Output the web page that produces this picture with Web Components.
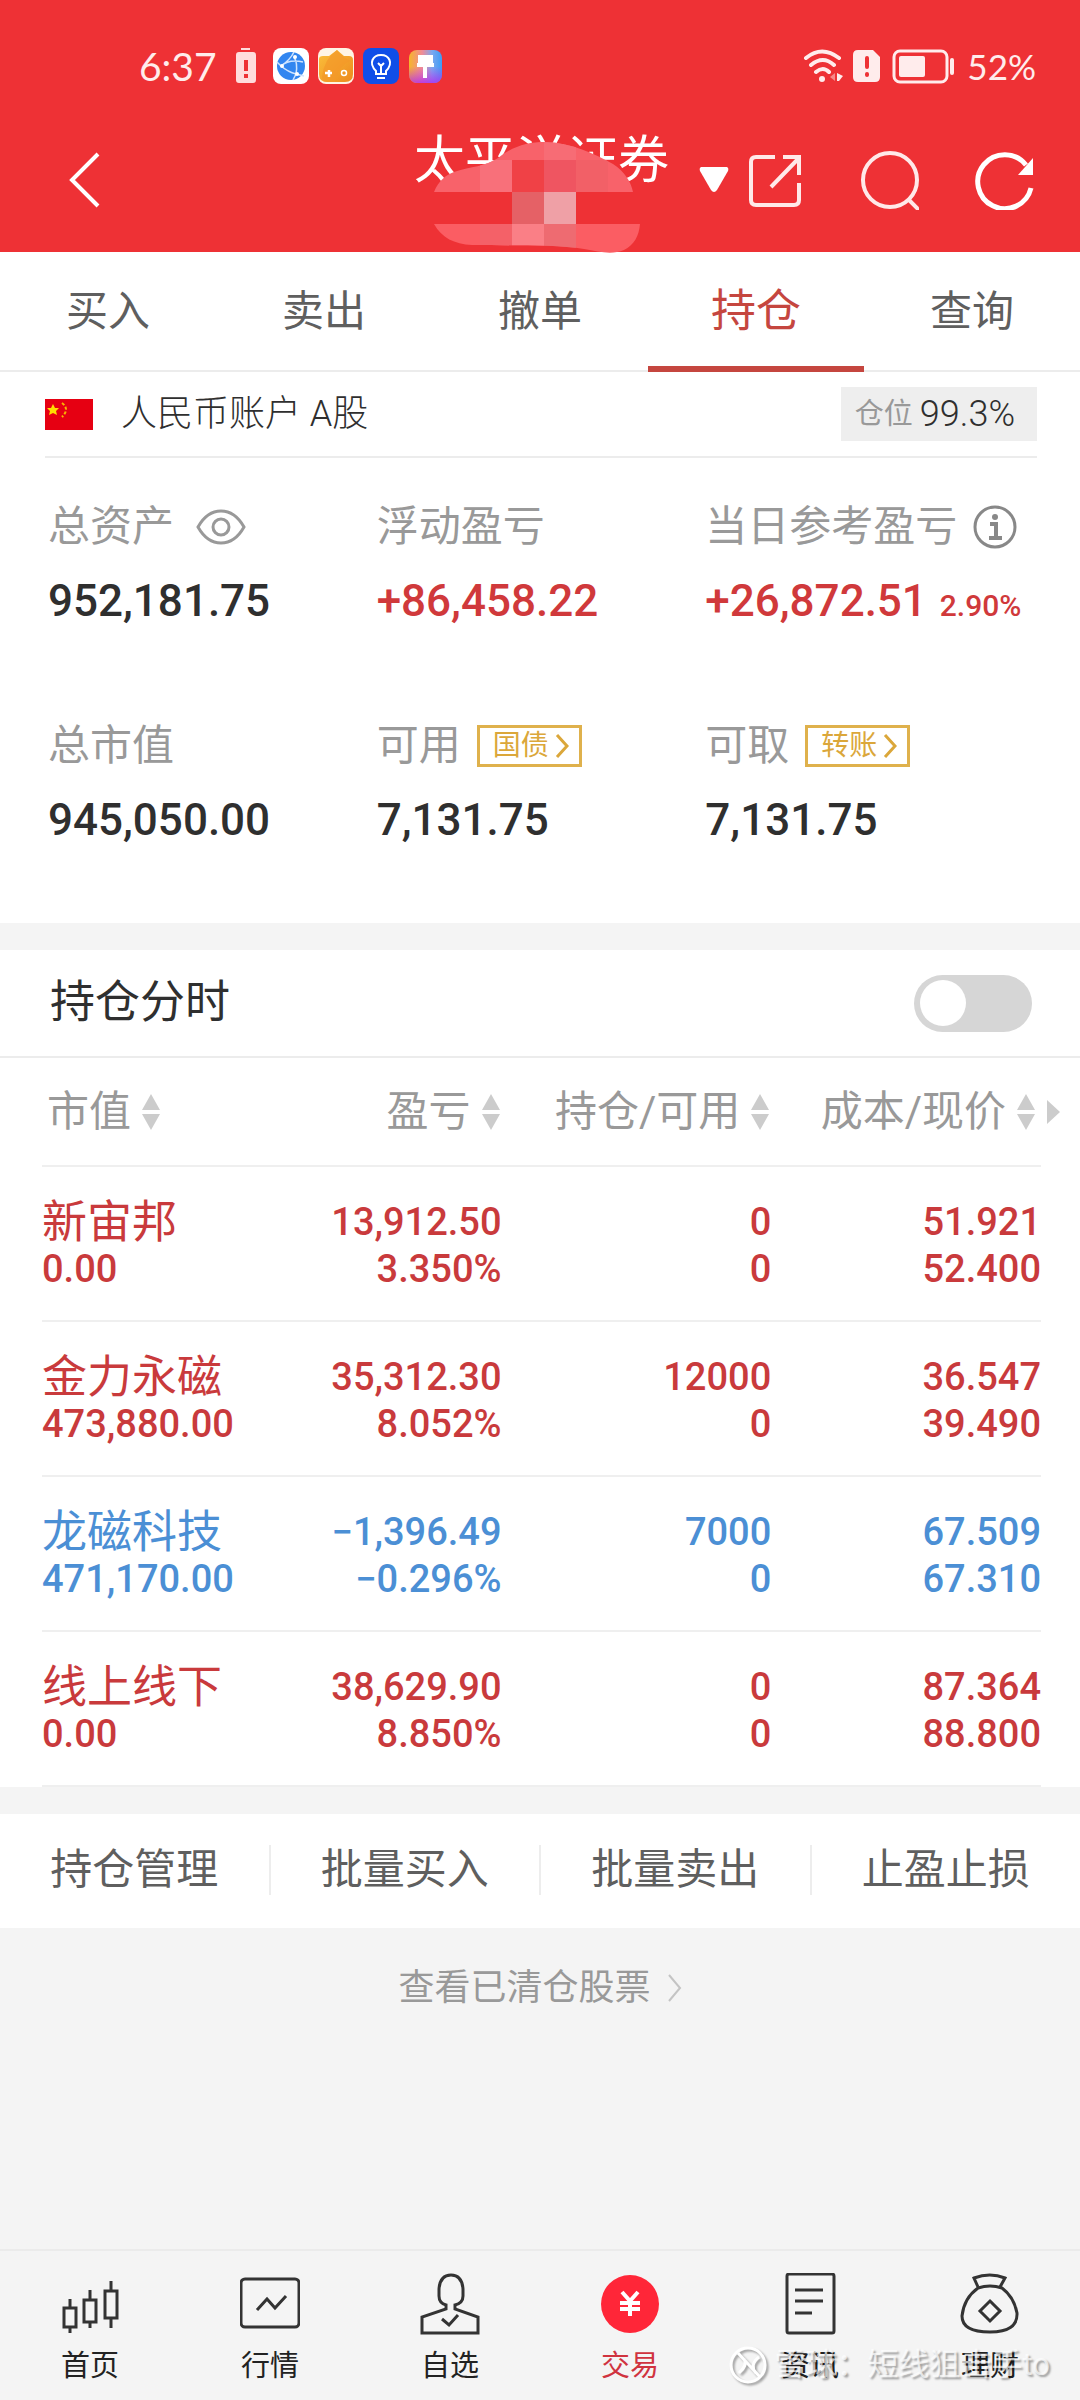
<!DOCTYPE html>
<html lang="zh-CN">
<head>
<meta charset="utf-8">
<meta name="viewport" content="width=device-width, initial-scale=1">
<title>持仓</title>
<style>
  * { box-sizing: border-box; }
  body {
    margin: 0;
    min-height: 100vh;
    display: flex;
    flex-direction: column;
    background: #f4f4f4;
    color: #2f2f2f;
    font-family: Roboto, "Noto Sans CJK SC", sans-serif;
  }
  main { display: flex; flex-direction: column; }
  trade-panel + trade-panel { margin-top: 27px; }
  app-nav { margin-top: auto; }
</style>
</head>
<body>
<app-header battery="52%" time="6:37">太平洋证券</app-header>
<main>
  <trade-panel>
    <trade-tabs data-tabs='["买入","卖出","撤单","持仓","查询"]' active="3"></trade-tabs>
    <account-bar label="仓位" ratio="99.3%">人民币账户 A股</account-bar>
    <account-summary>
      <summary-item value="952,181.75" icon="eye">总资产</summary-item>
      <summary-item value="+86,458.22" up>浮动盈亏</summary-item>
      <summary-item value="+26,872.51" extra="2.90%" icon="info" up>当日参考盈亏</summary-item>
      <summary-item value="945,050.00">总市值</summary-item>
      <summary-item value="7,131.75" link="国债">可用</summary-item>
      <summary-item value="7,131.75" link="转账">可取</summary-item>
    </account-summary>
  </trade-panel>
  <trade-panel>
    <switch-row>持仓分时</switch-row>
    <holdings-table></holdings-table>
  </trade-panel>
  <trade-panel>
    <action-bar data-actions='["持仓管理","批量买入","批量卖出","止盈止损"]'></action-bar>
  </trade-panel>
  <more-link>查看已清仓股票</more-link>
</main>
<app-nav active="3"></app-nav>

<script>
class BaseElement extends HTMLElement {
  constructor() {
    super();
    this.attachShadow({ mode: "open" });
  }

  connectedCallback() {
    this.shadowRoot.innerHTML = `
      <style>
        * { box-sizing: border-box; }
        :host { display: block; }
        svg { display: block; flex: none; }
        button, a {
          font: inherit; color: inherit; background: none; border: 0;
          margin: 0; padding: 0; text-decoration: none; cursor: pointer;
        }
        ${this.styles()}
      </style>
      ${this.template()}
    `;
  }

  styles() {
    return "";
  }

  template() {
    return "<slot></slot>";
  }
}

class AppHeader extends BaseElement {
  styles() {
    return `
      :host { background: #ee3135; color: #fff; }
      .status {
        display: flex; align-items: center; justify-content: space-between;
        height: 108px; padding: 24px 44px 0 139px;
        font: 39px/48px Lato, sans-serif; color: #ffecec;
      }
      .status-group { display: flex; align-items: center; gap: 10px; }
      .battery { font-size: 35px; padding-left: 2px; }
      .time { padding-right: 8px; }
      .bar {
        display: grid; grid-template-columns: 1fr auto 1fr; align-items: center;
        height: 144px; padding: 0 45px 0 48px;
      }
      .back { justify-self: start; padding-left: 16px; }
      .title {
        position: relative; margin: 0 -10px; padding-bottom: 38px;
        font-size: 51px; line-height: 60px; font-weight: 400;
      }
      .title svg { position: absolute; left: 20px; top: 9px; }
      .tools { display: flex; justify-content: flex-end; align-items: center; gap: 56px; }
      .switch { display: flex; align-items: center; gap: 18px; }
    `;
  }

  template() {
    return `
      <div class="status">
        <div class="status-group">
          <span class="time">${this.getAttribute("time")}</span>
          <svg width="22" height="36" viewBox="0 0 22 36">
            <path fill="#ffdcdc" d="M6 0h9v2H6zM4 4h14q3 0 3 3v25q0 3-3 3H4q-3 0-3-3V7q0-3 3-3z"/>
            <path stroke="#ee3135" stroke-width="4" d="M11 12v11M11 26v4"/>
          </svg>
          <svg width="176" height="38" viewBox="0 0 176 38">
            <defs>
              <linearGradient id="fox" x1="0" y1="0" x2="1" y2="1"><stop stop-color="#fbc03b"/><stop offset="1" stop-color="#ed8a1e"/></linearGradient>
              <linearGradient id="paint" x1="0" y1="0" x2="1" y2="0"><stop stop-color="#f7b529"/><stop offset=".4" stop-color="#f08b97"/><stop offset=".7" stop-color="#7aa8f0"/><stop offset="1" stop-color="#3c9bf5"/></linearGradient>
              <linearGradient id="paint2" x1="0" y1="0" x2="0" y2="1"><stop offset=".5" stop-color="#c32ef0" stop-opacity="0"/><stop offset="1" stop-color="#b02bf0" stop-opacity=".8"/></linearGradient>
            </defs>
            <g transform="translate(6 0)">
              <rect y="1" width="36" height="36" rx="8" fill="#fff"/>
              <circle cx="18" cy="19" r="14" fill="#3286f0"/>
              <path fill="none" stroke="#cfe4ff" stroke-width="1.5" d="M21 5q-4 8-13 14 7 6 15 8 2-11-2-17M8 19l-4-4M8 19q8-7 22-4M23 27l8 2M23 27l-3 6"/>
              <circle cx="9" cy="19" r="2" fill="#fff"/><circle cx="22" cy="10" r="2" fill="#fff"/><circle cx="24" cy="27" r="2" fill="#fff"/>
            </g>
            <g transform="translate(51 0)">
              <rect y="1" width="36" height="36" rx="8" fill="#fff4e4"/>
              <path fill="url(#fox)" d="M1 12q0-3 4-3h6l8-6 7 6h5q4 0 4 4v14q0 8-8 8H9q-8 0-8-8z"/>
              <path fill="#f3982a" d="M4 30Q6 12 19 3q6 8 14 11-12 3-16 21H9q-5 0-5-5z" opacity=".7"/>
              <path stroke="#fff" stroke-width="2.5" d="M11 23v7M7 26h7"/>
              <circle cx="26" cy="26" r="2.5" fill="none" stroke="#fff" stroke-width="1.5"/>
            </g>
            <g transform="translate(96 0)">
              <rect y="1" width="36" height="36" rx="8" fill="#104ee8"/>
              <path fill="none" stroke="#fff" stroke-width="2" d="M13 27v-3c-8-8-3-16 5-16s13 8 5 16v3zM14 31h8M18 26v-7M15 16l3 3 3-3"/>
            </g>
            <g transform="translate(142 0)">
              <rect y="3" width="33" height="33" rx="8" fill="url(#paint)"/>
              <rect y="3" width="33" height="33" rx="8" fill="url(#paint2)"/>
              <path fill="#fff" d="M9 8h15v8h1v4h-7v11h-4V20H8v-4h1z"/>
            </g>
          </svg>
        </div>
        <div class="status-group">
          <svg width="40" height="36" viewBox="0 0 40 36" fill="none" stroke="#ffecec" stroke-width="4" stroke-linecap="round">
            <path d="M3 10q16-13 33 0M8 17q12-10 23 0M13 24q7-6 13 0"/>
            <circle cx="19" cy="31" r="3" fill="#ffecec" stroke="none"/>
            <path fill="#ffecec" stroke="none" d="M34 25v8h2l4-5z"/>
            <path fill="#f7898a" stroke="none" d="M32 25v8l-5-4z"/>
          </svg>
          <svg width="28" height="34" viewBox="0 0 28 34">
            <path fill="#ffecec" d="M5 1h15l7 7v20q0 5-5 5H5q-5 0-5-5V6q0-5 5-5z"/>
            <path stroke="#ee3135" stroke-width="4" stroke-linecap="round" d="M14 9v9M14 25v1"/>
          </svg>
          <svg width="64" height="36" viewBox="0 0 64 36">
            <rect x="3" y="3" width="53" height="31" rx="6" fill="none" stroke="#ffecec" stroke-width="3"/>
            <rect x="8" y="8" width="26" height="21" rx="2" fill="#ffecec"/>
            <path stroke="#ffecec" stroke-width="4" stroke-linecap="round" d="M61 12v13"/>
          </svg>
          <span class="battery">${this.getAttribute("battery")}</span>
        </div>
      </div>
      <div class="bar">
        <button class="back" aria-label="返回">
          <svg width="40" height="60" viewBox="0 0 40 60" fill="none" stroke="#fff" stroke-width="4"><path d="M34 4L8 30l26 26"/></svg>
        </button>
        <h1 class="title">
          <slot></slot>
          <svg width="210" height="114" viewBox="434 140 210 114">
            <clipPath id="top"><path d="M434 192c5-12 12-17 20-20 18-6 30-5 44-14 15-12 30-16 47-16 28 1 50 12 68 22 12 8 18 18 20 28z"/></clipPath>
            <clipPath id="low"><path d="M434 224c8 14 20 20 38 21 30 1 80-1 112 4 16 3 28 6 40 1 10-5 15-14 16-26z"/></clipPath>
            <path fill="#ee3135" d="M434 192h206v32H434z"/>
            <g clip-path="url(#top)">
              <path fill="#f8626a" d="M434 140h210v52H434z"/>
              <path fill="#f8707a" d="M480 160h32v32h-32z"/>
              <path fill="#f04146" d="M512 160h32v32h-32z"/>
              <path fill="#ef5561" d="M544 160h32v32h-32z"/>
              <path fill="#f26067" d="M576 160h32v32h-32z"/>
              <path fill="#f76c75" d="M544 140h32v20h-32z"/>
            </g>
            <path fill="#e56166" d="M512 192h32v32h-32z"/>
            <path fill="#efa0a6" d="M544 192h32v32h-32z"/>
            <g clip-path="url(#low)">
              <path fill="#fb5d63" d="M434 224h210v30H434z"/>
              <path fill="#f46168" d="M480 224h32v30h-32z"/>
              <path fill="#fa7f86" d="M512 224h32v30h-32z"/>
              <path fill="#ee6b71" d="M544 224h32v30h-32z"/>
            </g>
          </svg>
        </h1>
        <div class="tools">
          <div class="switch">
            <button aria-label="切换账户">
              <svg width="30" height="28" viewBox="0 0 30 28"><path fill="#fff" d="M2 1h26q2 1 1 4L18 24q-3 4-6 0L1 5Q0 2 2 1z"/></svg>
            </button>
            <button aria-label="分享">
              <svg width="56" height="60" viewBox="0 0 56 60" fill="none" stroke="#ffe9e9" stroke-width="4">
                <path d="M28 7H9q-5 0-5 5v38q0 5 5 5h38q5 0 5-5V33M24 37L51 9M36 7h16v18"/>
              </svg>
            </button>
          </div>
          <button aria-label="搜索">
            <svg width="60" height="60" viewBox="0 0 60 60" fill="none" stroke="#ffe9e9" stroke-width="4"><circle cx="31" cy="30" r="27"/><path d="M49 49l11 11"/></svg>
          </button>
          <button aria-label="刷新">
            <svg width="60" height="60" viewBox="0 0 60 60" fill="none" stroke="#fff" stroke-width="5"><path d="M56 38A27 27 0 1 1 51 15"/><path fill="#fff" stroke="none" d="M58 8v17H43z"/></svg>
          </button>
        </div>
      </div>
    `;
  }
}

class TradePanel extends BaseElement {
  styles() {
    return ":host { background: #fff; }";
  }
}

class TradeTabs extends BaseElement {
  styles() {
    return `
      nav { display: flex; height: 120px; border-bottom: 2px solid #ececec; }
      button {
        flex: 1; height: 120px; padding-top: 6px;
        font-size: 42px; line-height: 48px; color: #5f5f5f;
        border-bottom: 6px solid transparent;
      }
      .is-active { font-size: 45px; color: #c5463f; border-color: #c5463f; }
    `;
  }

  template() {
    const active = Number(this.getAttribute("active"));
    const tabs = JSON.parse(this.getAttribute("data-tabs"));
    return `<nav>${tabs
      .map((tab, idx) => `<button class="${idx === active ? "is-active" : ""}">${tab}</button>`)
      .join("")}</nav>`;
  }
}

class AccountBar extends BaseElement {
  styles() {
    return `
      :host {
        display: flex; align-items: center; height: 86px; margin: 0 43px 0 45px;
        border-bottom: 2px solid #ececec; font-size: 36px; line-height: 48px; font-weight: 300;
      }
      .name { flex: 1; padding-left: 28px; }
      .ratio {
        display: flex; align-items: center; gap: 7px; height: 54px; padding: 0 22px 0 14px;
        background: #eee;
      }
      .ratio span { font-size: 29px; font-weight: 400; color: #999; }
    `;
  }

  template() {
    return `
      <svg width="48" height="31" viewBox="0 0 48 31">
        <rect width="48" height="31" fill="#e60012"/>
        <path fill="#ffde00" d="M8 5l2 4h4l-3 3 1 4-4-2-4 2 1-4-3-3h4z"/>
        <path stroke="#f8b500" stroke-width="2" stroke-dasharray="3 2" fill="none" d="M17 4q8 6 0 14"/>
      </svg>
      <span class="name"><slot></slot></span>
      <div class="ratio"><span>${this.getAttribute("label")}</span>${this.getAttribute("ratio")}</div>
    `;
  }
}

class AccountSummary extends BaseElement {
  styles() {
    return `
      :host {
        display: grid; grid-template-columns: repeat(3, 1fr); row-gap: 94px;
        padding: 42px 46px 79px 48px;
      }
    `;
  }
}

class SummaryItem extends BaseElement {
  styles() {
    return `
      :host { white-space: nowrap; }
      .label {
        display: flex; align-items: center; gap: 16px; height: 54px;
        font-size: 42px; line-height: 54px; color: #999;
      }
      .value {
        margin-top: 23px; font-size: 44px; line-height: 48px; font-weight: 500; color: #2f2f2f;
      }
      :host([up]) .value { color: #d0393b; }
      small { font-size: 30px; line-height: 30px; padding-left: 2px; }
      a {
        display: flex; align-items: center; gap: 6px; height: 42px; padding: 0 10px 0 13px;
        border: 3px solid #dfb14c; font-size: 28px; line-height: 36px; color: #dba73a;
      }
    `;
  }

  template() {
    const icons = {
      eye: `<button aria-label="隐藏金额"><svg width="56" height="40" viewBox="0 0 56 40" fill="none" stroke="#999" stroke-width="3">
        <path d="M8 20Q17 4 31 4t23 16q-9 16-23 16T8 20z"/><circle cx="31" cy="20" r="8"/></svg></button>`,
      info: `<button aria-label="说明"><svg width="44" height="44" viewBox="0 0 44 44" fill="none" stroke="#888" stroke-width="3">
        <circle cx="22" cy="22" r="20"/><circle cx="22" cy="12" r="3" fill="#888" stroke="none"/><path stroke-width="4" d="M17 19h6v14M16 33h13"/></svg></button>`
    };
    const icon = this.getAttribute("icon");
    const link = this.getAttribute("link");
    const extra = this.getAttribute("extra");
    return `
      <div class="label">
        <slot></slot>
        ${icon ? icons[icon] : ""}
        ${link ? `<a href="#">${link}<svg width="14" height="26" viewBox="0 0 14 26" fill="none" stroke="#dba73a" stroke-width="3"><path d="M2 2l10 11L2 24"/></svg></a>` : ""}
      </div>
      <div class="value">${this.getAttribute("value")}${extra ? ` <small>${extra}</small>` : ""}</div>
    `;
  }
}

class SwitchRow extends BaseElement {
  styles() {
    return `
      label {
        display: flex; align-items: center; justify-content: space-between;
        height: 108px; padding: 0 48px 0 50px; border-bottom: 2px solid #ececec;
        font-size: 45px; line-height: 54px;
      }
      input {
        appearance: none; display: flex; align-items: center;
        width: 118px; height: 57px; margin: 0; padding: 0 6px;
        border-radius: 29px; background: #d6d6d6;
      }
      input::before { content: ""; width: 46px; height: 46px; border-radius: 50%; background: #fff; }
      input:checked { background: #ee3135; justify-content: flex-end; }
    `;
  }

  template() {
    return `<label><slot></slot><input type="checkbox" role="switch"></label>`;
  }
}

class HoldingsTable extends BaseElement {
  constructor() {
    super();
    this.columns = ["市值", "盈亏", "持仓/可用", "成本/现价"];
    this.rows = [
      { trend: "up", cells: [["新宙邦", "0.00"], ["13,912.50", "3.350%"], ["0", "0"], ["51.921", "52.400"]] },
      { trend: "up", cells: [["金力永磁", "473,880.00"], ["35,312.30", "8.052%"], ["12000", "0"], ["36.547", "39.490"]] },
      { trend: "down", cells: [["龙磁科技", "471,170.00"], ["−1,396.49", "−0.296%"], ["7000", "0"], ["67.509", "67.310"]] },
      { trend: "up", cells: [["线上线下", "0.00"], ["38,629.90", "8.850%"], ["0", "0"], ["87.364", "88.800"]] }
    ];
  }

  styles() {
    return `
      :host { position: relative; padding: 0 39px 0 42px; }
      table { width: 100%; table-layout: fixed; border-collapse: collapse; }
      th, td { padding: 0; text-align: right; white-space: nowrap; border-bottom: 2px solid #efefef; }
      th { height: 108px; padding-right: 2px; font-size: 42px; line-height: 48px; font-weight: 400; color: #999; }
      th:nth-child(-n+2) { width: 23%; }
      th:first-child, td:first-child { text-align: left; }
      th:first-child { padding-left: 5px; }
      th:last-child { padding-right: 6px; }
      th button { display: inline-flex; align-items: center; gap: 11px; }
      td { padding: 32px 0 27px; font-size: 38px; line-height: 47px; font-weight: 500; }
      td span { display: block; }
      .name { font-size: 45px; font-weight: 400; }
      .up { color: #c93a3c; }
      .down { color: #4b8fd5; }
      .more { position: absolute; right: 20px; top: 42px; }
    `;
  }

  template() {
    const sort = `<svg width="18" height="38" viewBox="0 0 18 38" fill="#ccc"><path d="M9 1l9 16H0zM9 37l9-16H0z"/></svg>`;
    return `
      <table>
        <thead><tr>${this.columns.map(col => `<th><button>${col}${sort}</button></th>`).join("")}</tr></thead>
        <tbody>
          ${this.rows
            .map(row => `<tr class="${row.trend}">${row.cells
              .map((cell, idx) => `<td><span class="${idx === 0 ? "name" : ""}">${cell[0]}</span><span>${cell[1]}</span></td>`)
              .join("")}</tr>`)
            .join("")}
        </tbody>
      </table>
      <svg class="more" width="13" height="24" viewBox="0 0 13 24" fill="#ccc"><path d="M0 0l13 12L0 24z"/></svg>
    `;
  }
}

class ActionBar extends BaseElement {
  styles() {
    return `
      div { display: flex; align-items: center; height: 114px; padding-bottom: 2px; }
      button { flex: 1; height: 50px; font-size: 42px; line-height: 48px; color: #5f5f5f; }
      button + button { border-left: 2px solid #ededed; }
    `;
  }

  template() {
    const actions = JSON.parse(this.getAttribute("data-actions"));
    return `<div>${actions.map(item => `<button>${item}</button>`).join("")}</div>`;
  }
}

class MoreLink extends BaseElement {
  styles() {
    return `
      :host { display: flex; justify-content: center; padding: 36px 0; }
      a { display: flex; align-items: center; gap: 17px; font-size: 36px; line-height: 48px; color: #999; }
    `;
  }

  template() {
    return `<a href="#"><slot></slot><svg width="14" height="30" viewBox="0 0 14 30" fill="none" stroke="#c4c4c4" stroke-width="2"><path d="M1 2l11 13L1 28"/></svg></a>`;
  }
}

class AppNav extends BaseElement {
  constructor() {
    super();
    this.items = [
      ["首页", `<path d="M10 26v9M10 54v6M30 17v10M30 49v6M51 8v10M51 45v10M4 35h12v19H4zM24 27h12v22H24zM45 18h12v27H45z"/>`],
      ["行情", `<rect x="1" y="6" width="58" height="48" rx="4"/><path d="M17 37l10-11 8 9 11-12"/>`],
      ["自选", `<path d="M26 36v-4q-7-2-7-9v-7Q20 2 31 2t12 14v7q0 7-8 9v4l23 8v16H2V44z"/><path d="M22 46l7 6 9-10"/>`],
      ["交易", `<circle cx="30" cy="31" r="29" fill="#ff2638" stroke="none"/><path stroke="#fff" stroke-width="4" d="M22 19l8 9 8-9M20 30h20M20 36h20M30 27v16"/>`],
      ["资讯", `<rect x="7" y="1" width="47" height="59" rx="2"/><path d="M15 17h28M15 28h28M15 40h17"/>`],
      ["理财", `<path d="M18 14L14 5q16-6 31 0l-5 9"/><path d="M18 15q12-4 24 0 12 9 15 25 1 19-27 19T2 43q2-18 16-28z"/><path d="M30 28l10 10-10 10-10-10z"/>`]
    ];
  }

  styles() {
    return `
      :host { position: relative; border-top: 2px solid #ebebeb; }
      nav { display: flex; padding: 22px 0 16px; }
      a {
        flex: 1; display: flex; flex-direction: column; align-items: center; gap: 13px;
        font-size: 29px; line-height: 36px; color: #222;
      }
      .is-active { color: #d0333f; }
      .mark {
        position: absolute; right: 30px; bottom: 15px; display: flex; align-items: center; gap: 6px;
        font-size: 31px; line-height: 40px; color: rgba(255, 255, 255, .7);
        text-shadow: 2px 2px 2px rgba(0, 0, 0, .35); pointer-events: none;
      }
      .mark svg { filter: drop-shadow(2px 2px 1px rgba(0, 0, 0, .35)); }
    `;
  }

  template() {
    const active = Number(this.getAttribute("active"));
    return `
      <nav>${this.items
        .map(([text, icon], idx) => `
          <a href="#" class="${idx === active ? "is-active" : ""}">
            <svg width="60" height="62" viewBox="0 0 60 62" fill="none" stroke="#333" stroke-width="3">${icon}</svg>${text}
          </a>`)
        .join("")}</nav>
      <div class="mark">
        <svg width="40" height="40" viewBox="0 0 40 40" fill="none" stroke="#fff" stroke-width="3">
          <circle cx="20" cy="20" r="17"/><path d="M10 8l22 24M16 14q4 6-5 14M31 12q-10 8-3 16"/>
        </svg>
        <span>雪球：短线狙击手to</span>
      </div>
    `;
  }
}

customElements.define("app-header", AppHeader);
customElements.define("trade-panel", TradePanel);
customElements.define("trade-tabs", TradeTabs);
customElements.define("account-bar", AccountBar);
customElements.define("account-summary", AccountSummary);
customElements.define("summary-item", SummaryItem);
customElements.define("switch-row", SwitchRow);
customElements.define("holdings-table", HoldingsTable);
customElements.define("action-bar", ActionBar);
customElements.define("more-link", MoreLink);
customElements.define("app-nav", AppNav);
</script>
</body>
</html>
